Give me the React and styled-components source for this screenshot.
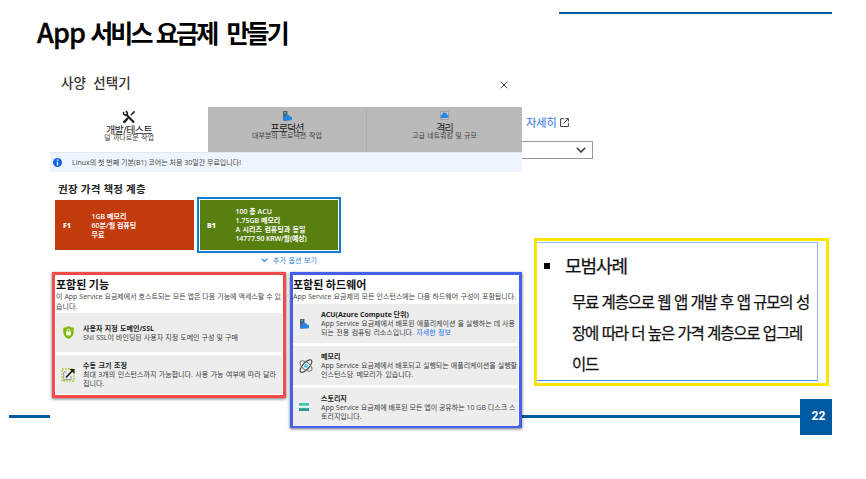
import React from 'react';
import styled, { createGlobalStyle } from 'styled-components';

const Global = createGlobalStyle`
  * { box-sizing: border-box; }
  body { margin: 0; background: #fff; overflow: hidden; }
  svg { display: block; flex: none; }
`;

const Slide = styled.div`
  width: 866px;
  height: 479px;
  display: grid;
  grid-template-columns: 50px 472px 1fr;
  grid-template-rows: 72px 327px 36px 44px;
  background: #fff;
  color: #222;
  font-family: 'Open Sans', 'Noto Sans CJK KR', sans-serif;
`;

/* One line of text; $w spreads the words over a fixed measure. */
const Line = styled.span`
  display: block;
  white-space: nowrap;
  width: ${(p) => (p.$w ? `${p.$w}px` : 'auto')};
  text-align-last: ${(p) => (p.$w ? 'justify' : 'auto')};
  letter-spacing: ${(p) => p.$ls || 0}px;
`;

const Header = styled.header`
  grid-column: 1 / -1;
  grid-row: 1;
  display: flex;
  justify-content: space-between;
  align-items: flex-start;
  padding: 12px 34px 0 37px;
`;

const Title = styled.h1`
  margin: 2px 0 0;
  font: 700 25px/36px 'Noto Sans CJK KR', sans-serif;
  color: #000;
`;

const Latin = styled.span`
  font-weight: 500;
  font-size: 27px;
  line-height: 30px;
  letter-spacing: -0.9px;
  -webkit-text-stroke: 0.4px #000;
`;

const TopRule = styled.div`
  width: 273px;
  height: 2px;
  background: #005aa1;
`;

const Footer = styled.footer`
  grid-column: 1 / -1;
  grid-row: 3;
  display: flex;
  align-items: center;
  padding: 0 34px 0 9px;
`;

const BottomRule = styled.div`
  flex: 1;
  height: 3px;
  margin-top: -1px;
  background: #005aa1;
`;

const PageNumber = styled.div`
  width: 32px;
  height: 36px;
  padding-left: 5px;
  background: #005aa1;
  color: #fff;
  font: 700 12px/35px Roboto, sans-serif;
  text-align: center;
`;

const Dialog = styled.section`
  grid-column: 2;
  grid-row: 2 / 4;
  z-index: 1;
  background: #fff;
  height: 357px;
`;

const DialogHeader = styled.div`
  height: 35px;
  display: flex;
  justify-content: space-between;
  align-items: flex-start;
  padding: 0 14px 0 11px;
  svg { margin-top: 9px; }
`;

const DialogTitle = styled.h2`
  margin: -1px 0 0;
  font: 500 13.5px/22px 'Noto Sans CJK KR', sans-serif;
  color: #333;
`;

const Tabs = styled.div`
  display: grid;
  grid-template-columns: 158px 158px 156px;
  height: 45px;
`;

const Tab = styled.div`
  display: flex;
  flex-direction: column;
  align-items: center;
  padding-top: ${(p) => (p.$active ? 3 : 4)}px;
  background: ${(p) => (p.$active ? '#fff' : '#bababa')};
  border-left: ${(p) => (p.$divided ? '1px solid #b0b0b0' : '0')};
`;

const TabName = styled.div`
  margin-top: ${(p) => p.$top || 0}px;
  font-size: 10px;
  line-height: 9px;
  color: #222;
`;

const TabNote = styled.div`
  margin-top: -1px;
  font-size: 7px;
  line-height: 7px;
  color: #444;
`;

const Notice = styled.div`
  display: flex;
  align-items: center;
  gap: 10px;
  height: 20px;
  padding-left: 3px;
  background: #eef5fe;
  border-top: 1px solid #e2e8f0;
  font-size: 7px;
  line-height: 18px;
  color: #444;
`;

const TierHeading = styled.h3`
  margin: 8px 0 0 8px;
  font: 700 10.5px/17px 'Noto Sans CJK KR', sans-serif;
  color: #222;
`;

const Tiers = styled.div`
  display: flex;
  align-items: center;
  gap: 3px;
  padding-left: 5px;
  height: 56px;
`;

const Tier = styled.div`
  display: flex;
  align-items: center;
  width: ${(p) => (p.$selected ? 144 : 139)}px;
  height: ${(p) => (p.$selected ? 56 : 50)}px;
  padding-left: 8px;
  background: ${(p) => p.$color};
  border: ${(p) => (p.$selected ? '2px solid #137ad6' : '0')};
  box-shadow: ${(p) => (p.$selected ? 'inset 0 0 0 1px #fff' : 'none')};
  color: #fff;
  font: 600 7px/9px 'Open Sans', 'Noto Sans CJK KR', sans-serif;
`;

const TierCode = styled.b`
  width: 28.5px;
  font-size: 7px;
`;

const MoreLink = styled.div`
  display: flex;
  align-items: center;
  gap: 5px;
  height: 14px;
  padding-left: 211px;
  font-size: 7px;
  color: #2c7fe0;
`;

const Panels = styled.div`
  display: flex;
  align-items: flex-start;
  gap: 4px;
  margin-top: 5px;
  padding-left: 2px;
`;

const Panel = styled.section`
  flex: none;
  width: ${(p) => p.$width}px;
  height: ${(p) => p.$height}px;
  padding-left: ${(p) => p.$left || 0}px;
  border: 3px solid ${(p) => p.$color};
  box-shadow: 0 1px 3px rgba(0, 0, 0, 0.55);
  background: #fff;
`;

const PanelTitle = styled.h3`
  margin: 1px 0 0;
  font: 700 11px/16px 'Noto Sans CJK KR', sans-serif;
  color: #111;
`;

const PanelText = styled.div`
  height: ${(p) => p.$height}px;
  font-size: 7px;
  line-height: 10px;
  color: #444;
`;

const Feature = styled.div`
  display: flex;
  align-items: center;
  height: ${(p) => p.$height || 39}px;
  margin: 0 1px 3px 0;
  background: #ededed;
`;

const IconCell = styled.div`
  display: flex;
  justify-content: center;
  width: ${(p) => p.$width}px;
  padding-right: ${(p) => p.$right || 0}px;
`;

const FeatureText = styled.div`
  font-size: 7px;
  line-height: 9px;
  color: #3c3c3c;
  b { color: #222; font-weight: 700; }
  a { color: #1d6fe0; }
`;

const Aside = styled.aside`
  grid-column: 3;
  grid-row: 2 / 4;
`;

const DetailLink = styled.div`
  display: flex;
  align-items: center;
  gap: 4px;
  height: 20px;
  margin-top: 40px;
  padding-left: 4px;
  font: 400 11.5px/20px 'Noto Sans CJK KR', sans-serif;
  color: #2b74e4;
`;

const Select = styled.div`
  display: flex;
  justify-content: flex-end;
  align-items: center;
  width: 71px;
  height: 18px;
  margin-top: 9px;
  padding-right: 6px;
  border: 1px solid #999;
  border-left: 0;
`;

const Callout = styled.section`
  width: 295px;
  height: 148px;
  margin: 79px 0 0 12px;
  padding: 1px 8px 3px 0;
  border: 3px solid #ffe600;
`;

const CalloutBody = styled.div`
  height: 139px;
  padding: 6px 0 0 6px;
  border: 1px solid #8bbcf5;
  border-bottom-color: #3d8ff0;
  border-left: 0;
  font: 400 15.5px/30.8px 'Noto Sans CJK KR', sans-serif;
  color: #111;
  -webkit-text-stroke: 0.25px #111;
`;

const CalloutTitle = styled.div`
  display: flex;
  align-items: center;
  gap: 15px;
  height: 32px;
  font-size: 18px;
`;

const Bullet = styled.i`
  width: 6px;
  height: 6px;
  margin: 1px 0 0 1px;
  background: #000;
`;

const CalloutText = styled.div`
  margin: 5px 0 0 29px;
`;

const Tools = () => (
  <svg width="14" height="14" viewBox="0 0 14 14" fill="none" stroke="#222">
    <path d="M4 4.2 L12 12.4" strokeWidth="2.2" />
    <path d="M12.6 1.4 L9 5 M7 7 L1.6 12.8" strokeWidth="1.5" />
    <path d="M1.5 1.9 L1.6 4.2 L3.5 5.4 L5.2 4.5 L5.2 2.4 L3.8 1" strokeWidth="1.5" />
    <path d="M5.5 8.5 L1.7 12.6" strokeWidth="2.4" />
  </svg>
);

const ServerCloud = ({ size = 10 }) => (
  <svg width={size} height={size} viewBox="0 0 10 10">
    <path d="M1 0h4.5v9.5H1z" fill="#53606c" />
    <path d="M2 1h2v1.5H2z" fill="#32bedd" />
    <path d="M3.2 9.6a2 2 0 0 1-.2-4 2.7 2.7 0 0 1 5-.2 2.1 2.1 0 0 1 .1 4.2z" fill="#2385e4" />
  </svg>
);

const Isolated = () => (
  <svg width="9" height="9" viewBox="0 0 9 9">
    <rect x=".5" y=".5" width="8" height="8" fill="#c4c4c4" stroke="#999" strokeWidth=".8" />
    <path d="M2 6.9a1.5 1.5 0 0 1 0-3 2.5 2.5 0 0 1 5 0 1.5 1.5 0 0 1 0 3z" fill="#2385e4" />
  </svg>
);

const Info = () => (
  <svg width="9" height="9" viewBox="0 0 9 9">
    <circle cx="4.5" cy="4.5" r="4.5" fill="#1266e3" />
    <path d="M4.5 1.5v1.3M4.5 3.7v3.6" stroke="#fff" strokeWidth="1.3" />
  </svg>
);

const Chevron = ({ w, color, stroke = 1.2 }) => (
  <svg width={w} height={w * 0.6} viewBox="0 0 10 6" fill="none" stroke={color} strokeWidth={stroke}>
    <path d="M.8 .8 5 5 9.2 .8" />
  </svg>
);

const Shield = () => (
  <svg width="11" height="13" viewBox="0 0 11 13">
    <path d="M5.5 0Q7.5 1.6 10.7 1.7V6q0 4.6-5.2 7Q.3 10.6.3 6V1.7Q3.5 1.6 5.5 0z" fill="#7fba00" />
    <path d="M3.2 5.6h4.6v3.8H3.2z" fill="#fff" />
    <path d="M4.1 6V4.5a1.4 1.4 0 0 1 2.8 0V6" fill="none" stroke="#fff" strokeWidth=".9" />
  </svg>
);

const Scale = () => (
  <svg width="14" height="14" viewBox="0 0 14 14" fill="none">
    <rect x="1" y="1" width="12" height="12" stroke="#a4cf2c" strokeWidth="1.4" strokeDasharray="1.8 1.2" />
    <path d="M6 4H2.7v7.5H10V8" stroke="#999" strokeWidth="1" />
    <path d="M5 9.5 11 3.2" stroke="#222" strokeWidth="1.7" />
    <path d="M8.5 1h5v5z" fill="#222" />
  </svg>
);

const Orbit = () => (
  <svg width="14" height="14" viewBox="0 0 14 14" fill="none" stroke="#333" strokeWidth="1">
    <ellipse cx="7" cy="7" rx="8" ry="3.2" transform="rotate(-48 7 7)" />
    <ellipse cx="7" cy="7" rx="7" ry="3.7" transform="rotate(38 7 7)" stroke="#777" />
    <circle cx="7" cy="7" r="2" fill="#55c8e8" stroke="none" />
  </svg>
);

const Storage = () => (
  <svg width="10" height="8" viewBox="0 0 10 8">
    <path d="M0 0h10v2.8H0z" fill="#3cc4ad" />
    <path d="M0 2.8h10v2.4H0z" fill="#dcefed" />
    <path d="M0 5.2h10V8H0z" fill="#249c8c" />
  </svg>
);

const Close = () => (
  <svg width="8" height="8" viewBox="0 0 8 8" stroke="#444" strokeWidth="1">
    <path d="M.7 .7 7.3 7.3M7.3 .7.7 7.3" />
  </svg>
);

const External = () => (
  <svg width="9" height="9" viewBox="0 0 9 9" fill="none" stroke="#444" strokeWidth="1">
    <path d="M4 .7H.6v7.8h7.8V5M5.3 .6h3.1v3.1M8.3 .7 3.4 5.6" />
  </svg>
);

export default function App() {
  return (
    <>
      <Global />
      <Slide>
        <Header>
          <Title><Line $w={250} $ls={-2.8}><Latin>App</Latin> 서비스 요금제 &nbsp;만들기</Line></Title>
          <TopRule />
        </Header>

        <Dialog>
          <DialogHeader>
            <DialogTitle><Line $w={70} $ls={0.2}>사양 선택기</Line></DialogTitle>
            <Close />
          </DialogHeader>
          <Tabs>
            <Tab $active>
              <Tools />
              <TabName $top={2}><Line $ls={-0.6}>개발/테스트</Line></TabName>
              <TabNote><Line $w={50}>덜 까다로운 작업</Line></TabNote>
            </Tab>
            <Tab>
              <ServerCloud />
              <TabName $top={3}><Line $ls={-0.9}>프로덕션</Line></TabName>
              <TabNote><Line $w={70}>대부분의 프로덕션 작업</Line></TabNote>
            </Tab>
            <Tab $divided>
              <Isolated />
              <TabName $top={4}><Line $ls={-0.9}>격리</Line></TabName>
              <TabNote><Line $w={65}>고급 네트워킹 및 규모</Line></TabNote>
            </Tab>
          </Tabs>
          <Notice>
            <Info />
            <Line $w={169}>Linux의 첫 번째 기본(B1) 코어는 처음 30일간 무료입니다!</Line>
          </Notice>
          <TierHeading><Line $w={88} $ls={0.3}>권장 가격 책정 계층</Line></TierHeading>
          <Tiers>
            <Tier $color="#c23b0c">
              <TierCode>F1</TierCode>
              <div>
                <Line>1GB 메모리</Line>
                <Line>60분/월 컴퓨팅</Line>
                <Line>무료</Line>
              </div>
            </Tier>
            <Tier $selected $color="#58800f">
              <TierCode>B1</TierCode>
              <div>
                <Line>100 총 ACU</Line>
                <Line>1.75GB 메모리</Line>
                <Line $w={70}>A 시리즈 컴퓨팅과 동일</Line>
                <Line $w={70} $ls={-0.15}>14777.90 KRW/월(예상)</Line>
              </div>
            </Tier>
          </Tiers>
          <MoreLink>
            <Chevron w={7} color="#2c7fe0" stroke={1.6} />
            <Line $w={44}>추가 옵션 보기</Line>
          </MoreLink>
          <Panels>
            <Panel $width={234} $height={126} $left={1} $color="#f34a4a">
              <PanelTitle><Line $w={53}>포함된 기능</Line></PanelTitle>
              <PanelText $height={21}>
                <Line $w={225}>이 App Service 요금제에서 호스트되는 모든 앱은 다음 기능에 액세스할 수 있</Line>
                <Line>습니다.</Line>
              </PanelText>
              <Feature>
                <IconCell $width={27} $right={3}><Shield /></IconCell>
                <FeatureText>
                  <b><Line $w={71}>사용자 지정 도메인/SSL</Line></b>
                  <Line $w={155}>SNI SSL이 바인딩된 사용자 지정 도메인 구성 및 구매</Line>
                </FeatureText>
              </Feature>
              <Feature>
                <IconCell $width={27} $right={3}><Scale /></IconCell>
                <FeatureText>
                  <b><Line $w={44}>수동 크기 조정</Line></b>
                  <Line $w={193}>최대 3개의 인스턴스까지 가능합니다. 사용 가능 여부에 따라 달라</Line>
                  <Line>집니다.</Line>
                </FeatureText>
              </Feature>
            </Panel>
            <Panel $width={232} $height={156} $color="#4360ee">
              <PanelTitle><Line $w={73}>포함된 하드웨어</Line></PanelTitle>
              <PanelText $height={12}>
                <Line $w={223}>App Service 요금제의 모든 인스턴스에는 다음 하드웨어 구성이 포함됩니다.</Line>
              </PanelText>
              <Feature>
                <IconCell $width={28} $right={6}><ServerCloud /></IconCell>
                <FeatureText>
                  <b><Line $w={83}>ACU(Azure Compute 단위)</Line></b>
                  <Line $w={194}>App Service 요금제에서 배포된 애플리케이션 을 실행하는 데 사용</Line>
                  <Line $w={130}>되는 전용 컴퓨팅 리소스입니다. <a>자세한 정보</a></Line>
                </FeatureText>
              </Feature>
              <Feature>
                <IconCell $width={28} $right={3}><Orbit /></IconCell>
                <FeatureText>
                  <b><Line>메모리</Line></b>
                  <Line $w={196} $ls={-0.05}>App Service 요금제에서 배포되고 실행되는 애플리케이션을 실행할</Line>
                  <Line $w={92}>인스턴스당 메모리가 있습니다.</Line>
                </FeatureText>
              </Feature>
              <Feature $height={38}>
                <IconCell $width={28} $right={6}><Storage /></IconCell>
                <FeatureText>
                  <b><Line>스토리지</Line></b>
                  <Line $w={194}>App Service 요금제에 배포된 모든 앱이 공유하는 10 GB 디스크 스</Line>
                  <Line>토리지입니다.</Line>
                </FeatureText>
              </Feature>
            </Panel>
          </Panels>
        </Dialog>

        <Aside>
          <DetailLink><Line $ls={-0.5}>자세히</Line><External /></DetailLink>
          <Select><Chevron w={10} color="#333" stroke={1.5} /></Select>
          <Callout>
            <CalloutBody>
              <CalloutTitle><Bullet /><Line $ls={-1.1}>모범사례</Line></CalloutTitle>
              <CalloutText>
                <Line $w={237} $ls={-1.2}>무료 계층으로 웹 앱 개발 후 앱 규모의 성</Line>
                <Line $w={230} $ls={-1.2}>장에 따라 더 높은 가격 계층으로 업그레</Line>
                <Line $ls={-1.2}>이드</Line>
              </CalloutText>
            </CalloutBody>
          </Callout>
        </Aside>

        <Footer>
          <BottomRule />
          <PageNumber>22</PageNumber>
        </Footer>
      </Slide>
    </>
  );
}
